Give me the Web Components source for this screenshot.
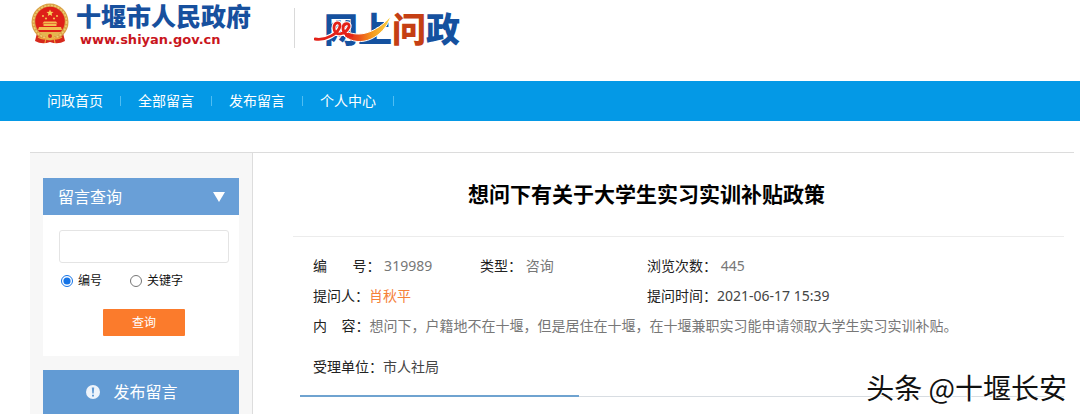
<!DOCTYPE html>
<html lang="zh-CN">
<head>
<meta charset="utf-8">
<title>网上问政</title>
<style>
    body {
        margin: 0;
        background: #fff;
        color: #222;
        font: 14px/28px "Noto Sans", "Noto Sans CJK SC", sans-serif;
    }
</style>
</head>
<body>
<gov-page>
    <site-header slot="header"></site-header>
    <site-nav slot="nav">
        <nav-item href="#home">问政首页</nav-item>
        <nav-item href="#all">全部留言</nav-item>
        <nav-item href="#post">发布留言</nav-item>
        <nav-item href="#me">个人中心</nav-item>
    </site-nav>
    <search-panel slot="side">留言查询</search-panel>
    <post-link slot="side" href="#post">发布留言</post-link>
    <message-detail>
        <span slot="title">想问下有关于大学生实习实训补贴政策</span>
        <info-field><span slot="label">编&nbsp;&nbsp;&nbsp;&nbsp;&nbsp;&nbsp;&nbsp;号：</span>&nbsp;319989</info-field>
        <info-field><span slot="label">类型：</span>&nbsp;咨询</info-field>
        <info-field><span slot="label">浏览次数：</span>&nbsp;445</info-field>
        <info-field class="half" tone="accent"><span slot="label">提问人：</span>肖秋平</info-field>
        <info-field tone="dark"><span slot="label">提问时间：</span>2021-06-17 15:39</info-field>
        <info-field class="full"><span slot="label">内&nbsp;&nbsp;&nbsp;&nbsp;容：</span>想问下，户籍地不在十堰，但是居住在十堰，在十堰兼职实习能申请领取大学生实习实训补贴。</info-field>
        <info-field class="full unit" tone="dark"><span slot="label">受理单位：</span>市人社局</info-field>
    </message-detail>
    <author-mark slot="mark">头条 @十堰长安</author-mark>
</gov-page>

<script>
// base class: every element here is just markup + styles in an open root
class Base extends HTMLElement {
    constructor() {
        super()
            .attachShadow({ mode: "open" })
            .innerHTML = `<style>:host,*{box-sizing:border-box}${this.css}</style>${this.html}`;
    }
}

customElements.define("gov-page", class extends Base {
    get css() {
        return `
            :host { display: block; position: relative; }
            .wrap { display: flex; margin: 31px 6px 0 30px; border-top: 1px solid #dcdcdc; }
            aside {
                flex: none; width: 223px; padding: 25px 13px 0;
                display: flex; flex-direction: column; gap: 14px;
                background: #f7f7f7; border-right: 1px solid #ddd;
            }
            main { flex: 1; min-width: 0; }
        `;
    }
    get html() {
        return `
            <slot name="header"></slot>
            <slot name="nav"></slot>
            <div class="wrap">
                <aside><slot name="side"></slot></aside>
                <main><slot></slot></main>
            </div>
            <slot name="mark"></slot>
        `;
    }
});

customElements.define("site-header", class extends Base {
    get css() {
        return `
            :host { display: flex; align-items: flex-start; height: 81px; padding: 3px 30px 0; }
            .emblem { flex: none; width: 40px; height: 42px; margin-right: 6px; }
            .gov { display: flex; flex-direction: column; }
            .name { font: 900 25px/29px "Liberation Sans", "Noto Sans CJK SC", sans-serif; color: #17509e; }
            .url { padding-left: 4px; font: bold 13px/15px "DejaVu Sans", sans-serif; color: #c9161d; }
            i { width: 1px; height: 40px; margin: 5px 29px 0 43px; background: #d9d9d9; }
            .wz { position: relative; font-size: 34px; line-height: 52px; font-weight: 900; color: #15519f; }
            .wz b { font-weight: inherit; color: #c53f14; }
            .wz svg { position: absolute; left: -10px; top: 10px; width: 80px; height: 32px; }
        `;
    }
    get html() {
        return `
            <svg class="emblem" viewBox="0 0 40 42">
                <path d="M7 30 L5 38 Q12 42 20 39 Q28 42 35 38 L33 30Z" fill="#d6281c"/>
                <circle cx="20" cy="19" r="18.5" fill="#d9a045"/>
                <circle cx="20" cy="19" r="16.5" fill="none" stroke="#f0cb70" stroke-width="1.6" stroke-dasharray="2 1.4"/>
                <circle cx="20" cy="18.5" r="14.8" fill="#de1f19"/>
                <path d="M20 6.5l1 2.3 2.5.2-1.9 1.6.6 2.4-2.2-1.3-2.2 1.3.6-2.4-1.9-1.6 2.5-.2z" fill="#f7d259"/>
                <g fill="#f3bd50">
                    <circle cx="13" cy="13" r="1.1"/><circle cx="16" cy="15.5" r="1.1"/>
                    <circle cx="24" cy="15.5" r="1.1"/><circle cx="27" cy="13" r="1.1"/>
                    <path d="M14 18.5h12l1.5 2h-15zM13.5 21h13v2h-13zM9 24h22l1 3H8z"/>
                </g>
                <path d="M9 29h22l-4 4H13z" fill="#e5b451"/>
                <circle cx="20" cy="33" r="4" fill="#e8b64a"/>
                <circle cx="20" cy="33" r="2" fill="#d6281c"/>
                <path d="M8 34q5 3 8 1l-1 5M32 34q-5 3-8 1l1 5" fill="none" stroke="#f0a33d" stroke-width="1.2"/>
            </svg>
            <div class="gov">
                <span class="name">十堰市人民政府</span>
                <span class="url">www.shiyan.gov.cn</span>
            </div>
            <i></i>
            <div class="wz">网上<b>问</b>政
                <svg viewBox="0 0 80 32">
                    <defs>
                        <linearGradient id="g">
                            <stop offset="0" stop-color="#e32219"/>
                            <stop offset=".3" stop-color="#ea4a1a"/>
                            <stop offset=".6" stop-color="#f49a1c"/>
                            <stop offset="1" stop-color="#fbd64a"/>
                        </linearGradient>
                    </defs>
                    <path d="M1 26 C12 28 25 20 26 13 C26 8 20 9 20 15 C20 24 31 22 35 14 C36 9 29 10 29 15 C29 20 33 24 40 24"
                        fill="none" stroke="#fff" stroke-width="5"/>
                    <path d="M34 19 C46 24 62 20 77 3 C70 25 46 36 30 23Z" fill="url(#g)" stroke="#fff" stroke-width="1"/>
                    <path d="M1 26 C12 28 25 20 26 13 C26 8 20 9 20 15 C20 24 31 22 35 14 C36 9 29 10 29 15 C29 20 33 23 38 23"
                        fill="none" stroke="#e32219" stroke-width="2.8" stroke-linecap="round"/>
                </svg>
            </div>
        `;
    }
});

customElements.define("site-nav", class extends Base {
    get css() {
        return `
            :host { display: block; background: #0499e6; }
            nav { display: flex; align-items: center; height: 40px; padding: 0 30px; }
        `;
    }
    get html() { return `<nav><slot></slot></nav>`; }
});

customElements.define("nav-item", class extends Base {
    get css() {
        return `
            :host { display: flex; align-items: center; }
            a { padding: 0 17px; color: #fff; text-decoration: none; }
            :host::after { content: ""; width: 1px; height: 10px; background: #4fbdf2; }
        `;
    }
    get html() { return `<a><slot></slot></a>`; }
    connectedCallback() {
        this.shadowRoot.querySelector("a").href = this.getAttribute("href");
    }
});

customElements.define("search-panel", class extends Base {
    get css() {
        return `
            :host { display: block; background: #fff; }
            h2 {
                display: flex; align-items: center; justify-content: space-between;
                height: 37px; margin: 0; padding: 0 14px 0 15px;
                background: #699fd7; color: #fff; font-size: 16px; font-weight: 400;
            }
            h2 svg { width: 12px; height: 10px; }
            form { padding: 15px 10px 20px 16px; }
            .box {
                display: block; width: 100%; height: 33px; padding: 0 8px;
                border: 1px solid #e4e4e4; border-radius: 3px; background: #fff; font: inherit;
            }
            .kinds { display: flex; gap: 26px; padding-top: 8px; font-size: 12px; line-height: 20px; color: #111; }
            label { display: flex; align-items: center; gap: 5px; }
            .kinds input { width: 12px; height: 12px; margin: 0 0 0 2px; accent-color: #1473e6; }
            button {
                display: block; width: 82px; height: 27px; margin: 18px auto 0; padding: 0;
                border: 0; border-radius: 1px; background: #fb7b2c; color: #fff;
                font: inherit; font-size: 12px; line-height: 27px;
            }
        `;
    }
    get html() {
        return `
            <h2><slot></slot><svg viewBox="0 0 12 10"><path d="M0 0h12L6 10z" fill="#fff"/></svg></h2>
            <form>
                <input class="box" type="text" name="q" aria-label="留言查询">
                <div class="kinds">
                    <label><input type="radio" name="kind" checked>编号</label>
                    <label><input type="radio" name="kind">关键字</label>
                </div>
                <button type="button">查询</button>
            </form>
        `;
    }
});

customElements.define("post-link", class extends Base {
    get css() {
        return `
            :host { display: block; background: #629bd4; }
            a {
                display: flex; align-items: center; justify-content: center; gap: 13px;
                height: 44px; padding-right: 18px; color: #fff; font-size: 16px; text-decoration: none;
            }
            svg { width: 14px; height: 14px; }
        `;
    }
    get html() {
        return `
            <a>
                <svg viewBox="0 0 14 14">
                    <circle cx="7" cy="7" r="7" fill="#eef4fb"/>
                    <path d="M5.8 2.5h2.4L7.7 8.5H6.3zM6 9.8h2v1.8H6z" fill="#629bd4"/>
                </svg>
                <slot></slot>
            </a>
        `;
    }
    connectedCallback() {
        this.shadowRoot.querySelector("a").href = this.getAttribute("href");
    }
});

customElements.define("message-detail", class extends Base {
    get css() {
        return `
            :host { display: block; padding: 0 10px 0 40px; }
            h1 {
                margin: 0; padding-right: 64px; border-bottom: 1px solid #ececec;
                text-align: center; font-size: 21px; line-height: 83px; font-weight: 700; color: #000;
            }
            .fields {
                display: grid; grid-template-columns: 167px 167px 1fr; row-gap: 2px;
                padding: 15px 0 0 20px;
            }
            ::slotted(.half) { grid-column: span 2; }
            ::slotted(.full) { grid-column: 1 / -1; }
            ::slotted(.unit) { margin-top: 11px; }
            .bar { display: flex; margin: 14px 0 0 7px; border-bottom: 1px solid #d8dde2; }
            .bar::before { content: ""; width: 279px; height: 2px; margin-bottom: -1px; background: #6fa3d0; }
        `;
    }
    get html() {
        return `
            <h1><slot name="title"></slot></h1>
            <div class="fields"><slot></slot></div>
            <div class="bar"></div>
        `;
    }
});

customElements.define("info-field", class extends Base {
    get css() {
        return `
            :host { display: block; color: #777; }
            :host([tone=dark]) { color: #444; }
            :host([tone=accent]) { color: #f5813a; }
            .label { color: #222; }
        `;
    }
    get html() { return `<span class="label"><slot name="label"></slot></span><slot></slot>`; }
});

customElements.define("author-mark", class extends Base {
    get css() {
        return `
            :host {
                position: absolute; right: 13px; bottom: 10px;
                font: 28px/34px "Noto Sans CJK SC", sans-serif;
                color: #111; text-shadow: -1px -1px 0 #fff, 1px 1px 0 #fff;
            }
        `;
    }
    get html() { return `<slot></slot>`; }
});
</script>
</body>
</html>
